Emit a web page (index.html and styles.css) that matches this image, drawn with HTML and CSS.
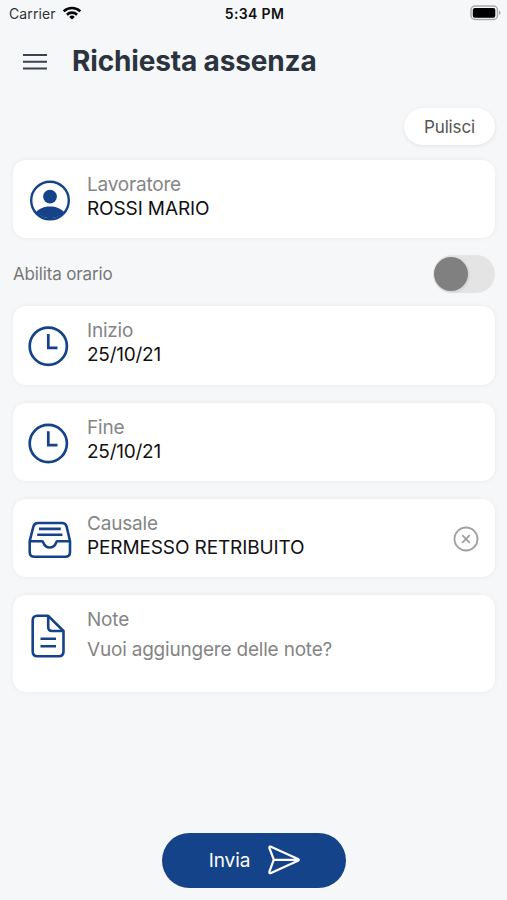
FILE: index.html
```html
<!DOCTYPE html>
<html lang="it">
<head>
<meta charset="utf-8">
<title>Richiesta assenza</title>
<link rel="stylesheet" href="styles.css">
</head>
<body>
<div class="status">
  <div class="carrier"><span class="carrier-name">Carrier</span>
    <svg class="wifi" width="20" height="14" viewBox="0 0 20 14"><g fill="none" stroke="#050505" stroke-width="2.6"><path d="M1.7 5.4A12 12 0 0 1 18.3 5.4"/><path d="M4.9 8.7A7.4 7.4 0 0 1 15.1 8.7"/></g><path d="M10 13.6L7.2 10.9A4 4 0 0 1 12.8 10.9Z" fill="#050505"/></svg>
  </div>
  <span class="time">5:34 PM</span>
  <svg class="battery" width="31" height="16" viewBox="0 0 31 16"><rect x="1" y="1" width="26.5" height="13.5" rx="4" fill="#f6f7f9" stroke="#aaa" stroke-width="1.5"/><rect x="2.8" y="2.9" width="22.500" height="9.8" rx="2" fill="#000"/><path d="M29 5.5Q30.6 6.3 30.6 7.8T29 10Z" fill="#aaa"/></svg>
</div>
<header class="header">
  <svg class="menu" width="24" height="18" viewBox="0 0 24 18"><path d="M0 2h24M0 8.8h24M0 15.6h24" stroke="#3a434d" stroke-width="2"/></svg>
  <h1 class="title">Richiesta assenza</h1>
</header>
<main class="form">
  <button class="clear" type="button"><span class="clear-text">Pulisci</span></button>
  <section class="card worker">
    <svg class="icon" viewBox="0 0 44 56"><circle cx="22" cy="28.5" r="18.8" fill="#fff" stroke="#14438a" stroke-width="2.4"/><circle cx="22" cy="24.6" r="6.9" fill="#14438a"/><path d="M8 40C11 36.500 16.500 34.500 22 34.500S33 36.500 36 40A18.800 18.800 0 0 1 8 40Z" fill="#14438a"/></svg>
    <div class="field"><span class="label">Lavoratore</span><span class="value v-worker">ROSSI MARIO</span></div>
  </section>
  <div class="toggle-row"><span class="toggle-label">Abilita orario</span><span class="switch"><span class="knob"></span></span></div>
  <section class="card start">
    <svg class="icon" viewBox="0 0 44 56"><g fill="none" stroke="#14438a" stroke-width="2.7"><circle cx="20.300" cy="28.200" r="18.600"/><path d="M20.300 16V29.800H29.500"/></g></svg>
    <div class="field"><span class="label">Inizio</span><span class="value v-date">25/10/21</span></div>
  </section>
  <section class="card end">
    <svg class="icon" viewBox="0 0 44 56"><g fill="none" stroke="#14438a" stroke-width="2.7"><circle cx="20.300" cy="28.500" r="18.600"/><path d="M20.300 16.300V30.100H29.500"/></g></svg>
    <div class="field"><span class="label">Fine</span><span class="value v-date">25/10/21</span></div>
  </section>
  <section class="card reason">
    <svg class="icon" viewBox="0 0 44 56"><g fill="none" stroke="#14438a" stroke-width="2.600" stroke-linejoin="round"><path d="M10 12H34Q37.800 12 38.600 15.500L42 30V41Q42 45.800 37.200 45.800H6.500Q1.700 45.800 1.700 41V30L5.400 15.500Q6.300 12 10 12Z"/><path d="M1.700 30.300H14.200C16 30.300 15 36.500 21.700 36.500S27.500 30.300 29.300 30.300H42M11 17.900H32.800M9.200 23.800H34.400"/></g></svg>
    <div class="field"><span class="label">Causale</span><span class="value v-reason">PERMESSO RETRIBUITO</span></div>
    <svg class="remove" width="26" height="26" viewBox="0 0 26 26"><g fill="none" stroke="#a0a0a0" stroke-width="1.800"><circle cx="13" cy="13" r="11.500"/><path d="M9.200 9.200L16.800 16.800M16.800 9.200L9.200 16.800"/></g></svg>
  </section>
  <section class="card notes">
    <svg class="icon" viewBox="0 0 44 56"><g fill="none" stroke="#14438a" stroke-width="2.600" stroke-linejoin="round"><path d="M9.300 8.800H20.200L35.500 24V44.500Q35.500 49.200 30.800 49.200H9.300Q4.700 49.200 4.700 44.500V13.500Q4.700 8.800 9.300 8.800Z"/><path d="M20.200 8.800V20Q20.200 24 24.200 24H35.500M12.500 31.800H28M12.500 39.200H28"/></g></svg>
    <div class="field"><span class="label">Note</span><span class="placeholder">Vuoi aggiungere delle note?</span></div>
  </section>
</main>
<footer class="footer"><button class="send" type="button"><span class="send-text">Invia</span>
  <svg width="34" height="30" viewBox="0 0 34 30"><path d="M4 1.800Q2 1 2.400 3L6.800 14.700L2.400 26.700Q2 28.800 4 28L31 15.700Q32.600 14.800 31 14ZM6.800 14.800H31" fill="none" stroke="#fff" stroke-width="2.2" stroke-linejoin="round"/></svg>
</button></footer>
</body>
</html>
```
FILE: styles.css
```css
* { box-sizing: border-box; }
body {
  margin: 0;
  height: 900px;
  overflow: hidden;
  display: flex;
  flex-direction: column;
  background: #f6f7f9;
  font-family: Inter, "Liberation Sans", sans-serif;
  white-space: nowrap;
}
button { border: 0; font: inherit; padding: 0; }
.status {
  height: 28px;
  display: grid;
  grid-template-columns: 1fr auto 1fr;
  align-items: center;
  padding: 0 6px 2px 9px;
}
.carrier { display: flex; align-items: center; gap: 6px; }
.carrier-name { font-size: 14px; letter-spacing: 0.1px; color: #303236; }
.wifi { margin-top: -1px; }
.time { font-size: 14px; font-weight: 600; letter-spacing: 0.350px; margin-right: 1px; color: #111; }
.battery { justify-self: end; }
.header { height: 66px; display: flex; align-items: center; gap: 25px; padding-left: 23px; }
.menu { margin-top: 2px; }
.title { margin: 0; font-size: 28px; line-height: 34px; font-weight: 700; color: #2b343e; letter-spacing: -0.150px; }
.form { display: flex; flex-direction: column; padding: 14px 12px 0 13px; }
.clear {
  align-self: flex-end;
  width: 91px;
  height: 37px;
  margin-bottom: 15px;
  border-radius: 19px;
  background: #fff;
  color: #555;
  font-size: 17px;
  letter-spacing: -0.150px;
  box-shadow: 0 1px 4px rgba(0, 0, 0, .09);
}
.card {
  display: flex;
  align-items: flex-start;
  gap: 15px;
  height: 78px;
  padding: 12px 16px 0 15px;
  border-radius: 13px;
  background: #fff;
  box-shadow: 0 0 5px rgba(0, 0, 0, .06);
}
.icon { flex: none; width: 44px; height: 56px; }
.field {
  display: flex;
  flex-direction: column;
  align-items: flex-start;
  flex: 1;
  padding-top: 1px;
  font-size: 19px;
  line-height: 24px;
  letter-spacing: -0.200px;
}
.label, .placeholder { color: #858585; }
.value { color: #111; }
.v-worker, .v-reason { letter-spacing: -0.120px; }
.v-date { letter-spacing: -0.250px; }
.toggle-row { height: 68px; display: flex; align-items: center; justify-content: space-between; padding-top: 4px; }
.toggle-label { font-size: 17px; letter-spacing: -0.150px; color: #777; }
.switch { width: 62px; height: 38px; padding: 2px 1px; border-radius: 19px; background: #e4e4e5; }
.knob { display: block; width: 34px; height: 34px; border-radius: 50%; background: #808080; box-shadow: 1px 1px 3px rgba(0, 0, 0, .1); }
.start, .end { height: 78.500px; margin-bottom: 18px; }
.reason { margin-bottom: 18px; height: 77.500px; }
.notes { height: 97px; }
.remove { margin-top: 14.500px; }
.placeholder { margin-top: 6px; }
.footer { margin-top: auto; display: flex; justify-content: center; padding-bottom: 12px; }
.send {
  width: 184px;
  height: 55px;
  padding-left: 3px;
  border-radius: 28px;
  background: #14438a;
  color: #fff;
  display: flex;
  align-items: center;
  justify-content: center;
  gap: 17px;
  font-size: 19px;
  letter-spacing: -0.100px;
}
.send svg { margin-top: -2px; }
```
